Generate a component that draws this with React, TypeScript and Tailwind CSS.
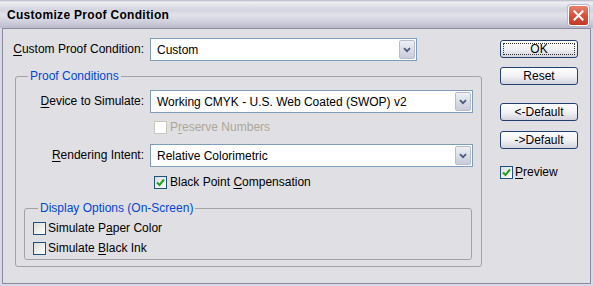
import React from "react";

const font = { fontFamily: '"Liberation Sans", Arial, sans-serif' };

// access key letter
const U = ({ children }: { children: React.ReactNode }) => (
  <span className="underline underline-offset-[2px]">{children}</span>
);

const Check = ({ checked = false, disabled = false }: { checked?: boolean; disabled?: boolean }) => (
  <span
    className={
      "flex h-[13px] w-[13px] shrink-0 items-center justify-center border " +
      (disabled
        ? "border-[#cac8bb] bg-white"
        : "border-[#1c5180] bg-gradient-to-br from-[#dcdcd7] to-white")
    }
  >
    {checked && (
      <svg width="9" height="9" viewBox="0 0 9 9">
        <path d="M1 4.5 L3.5 7 L8 1.5" fill="none" stroke="#21a121" strokeWidth="2" />
      </svg>
    )}
  </span>
);

const Select = ({ value, width }: { value: string; width: string }) => (
  <div className={`${width} flex h-[23px] items-center border border-[#7f9db9] bg-white`}>
    <span className="flex-1 pl-[6px] text-[12px] leading-none text-black">{value}</span>
    <span className="mr-px flex h-[19px] w-[16px] items-center justify-center rounded-[2px] border border-[#b9bccc] bg-gradient-to-b from-[#eef0f6] to-[#c9ccda]">
      <svg width="8" height="6" viewBox="0 0 8 6">
        <path d="M1 1.2 L4 4.2 L7 1.2" fill="none" stroke="#4d5a78" strokeWidth="1.8" />
      </svg>
    </span>
  </div>
);

const Button = ({ label, focused = false }: { label: string; focused?: boolean }) => (
  <div className="flex h-[18px] w-[78px] items-center justify-center rounded-[3px] border border-[#23406f] bg-gradient-to-b from-white via-[#f2f2f6] to-[#d3d3de] p-[2px]">
    <span
      className={
        "flex h-full w-full items-center justify-center text-[12px] leading-none text-black " +
        (focused ? "border border-dotted border-[#333]" : "")
      }
    >
      {label}
    </span>
  </div>
);

export default function App() {
  return (
    <div style={font} className="flex h-[286px] w-[593px] flex-col bg-[#d9d9e3]">
      {/* title bar */}
      <div className="flex h-[28px] items-center justify-between bg-[linear-gradient(to_bottom,#b4b4c6_0px,#eeeef4_2px,#d4d4e0_10px,#e2e2ea_15px,#cfcfdc_22px,#b9b9cb_28px)] pl-[7px] pr-[4px]">
        <span className="mt-[2px] text-[12px] font-bold tracking-[0.3px] text-black">Customize Proof Condition</span>
        <span className="mt-[3px] flex h-[21px] w-[21px] items-center justify-center rounded-[3px] border border-white bg-gradient-to-b from-[#e8826d] via-[#d6513b] to-[#c23a25] shadow-[0_0_0_1px_#b8b8c8]">
          <svg width="11" height="11" viewBox="0 0 11 11">
            <path d="M1.5 1.5 L9.5 9.5 M9.5 1.5 L1.5 9.5" stroke="white" strokeWidth="2" strokeLinecap="square" />
          </svg>
        </span>
      </div>

      {/* client area */}
      <div className="mx-[2px] mb-[2px] flex flex-1 border border-[#8a8aa0] bg-[#e0dfe3] pl-[10px] pt-[9px] text-[12px] leading-[13px] text-black">
        <div className="flex w-[469px] flex-col">
          <div className="flex items-center gap-[6px]">
            <span className="w-[131px] text-right">
              <U>C</U>ustom Proof Condition:
            </span>
            <Select value="Custom" width="w-[267px]" />
          </div>

          {/* Proof Conditions */}
          <div className="relative ml-[2px] mt-[15px] flex h-[191px] w-[467px] flex-col rounded-[3px] border border-[#a2a2a8] pt-[13px]">
            <span className="absolute -top-[7px] left-[12px] bg-[#e0dfe3] px-[2px] text-[#0046d5]">Proof Conditions</span>
            <div className="flex items-center gap-[6px]">
              <span className="w-[128px] text-right">
                <U>D</U>evice to Simulate:
              </span>
              <Select value="Working CMYK - U.S. Web Coated (SWOP) v2" width="w-[323px]" />
            </div>
            <div className="ml-[138px] mt-[8px] flex h-[13px] items-center gap-[3px] text-[#aca899]">
              <Check disabled />
              <span>
                P<U>r</U>eserve Numbers
              </span>
            </div>
            <div className="mt-[10px] flex items-center gap-[6px]">
              <span className="w-[128px] text-right">
                <U>R</U>endering Intent:
              </span>
              <Select value="Relative Colorimetric" width="w-[323px]" />
            </div>
            <div className="ml-[138px] mt-[9px] flex h-[13px] items-center gap-[3px]">
              <Check checked />
              <span>
                Black Point <U>C</U>ompensation
              </span>
            </div>

            {/* Display Options */}
            <div className="relative ml-[8px] mt-[19px] flex h-[52px] w-[448px] flex-col gap-[7px] rounded-[3px] border border-[#a2a2a8] pl-[8px] pt-[13px]">
              <span className="absolute -top-[7px] left-[13px] bg-[#e0dfe3] px-[2px] text-[#0046d5]">
                Display Options (On-Screen)
              </span>
              <div className="flex h-[13px] items-center gap-[2px]">
                <Check />
                <span>
                  Simulate P<U>a</U>per Color
                </span>
              </div>
              <div className="flex h-[13px] items-center gap-[2px]">
                <Check />
                <span>
                  Simulate <U>B</U>lack Ink
                </span>
              </div>
            </div>
          </div>
        </div>

        {/* buttons */}
        <div className="ml-[18px] flex w-[78px] flex-col pt-[2px]">
          <Button label="OK" focused />
          <div className="mt-[9px]">
            <Button label="Reset" />
          </div>
          <div className="mt-[18px]">
            <Button label="<-Default" />
          </div>
          <div className="mt-[10px]">
            <Button label="->Default" />
          </div>
          <div className="mt-[17px] flex h-[13px] items-center gap-[2px]">
            <Check checked />
            <span>
              <U>P</U>review
            </span>
          </div>
        </div>
      </div>
    </div>
  );
}
